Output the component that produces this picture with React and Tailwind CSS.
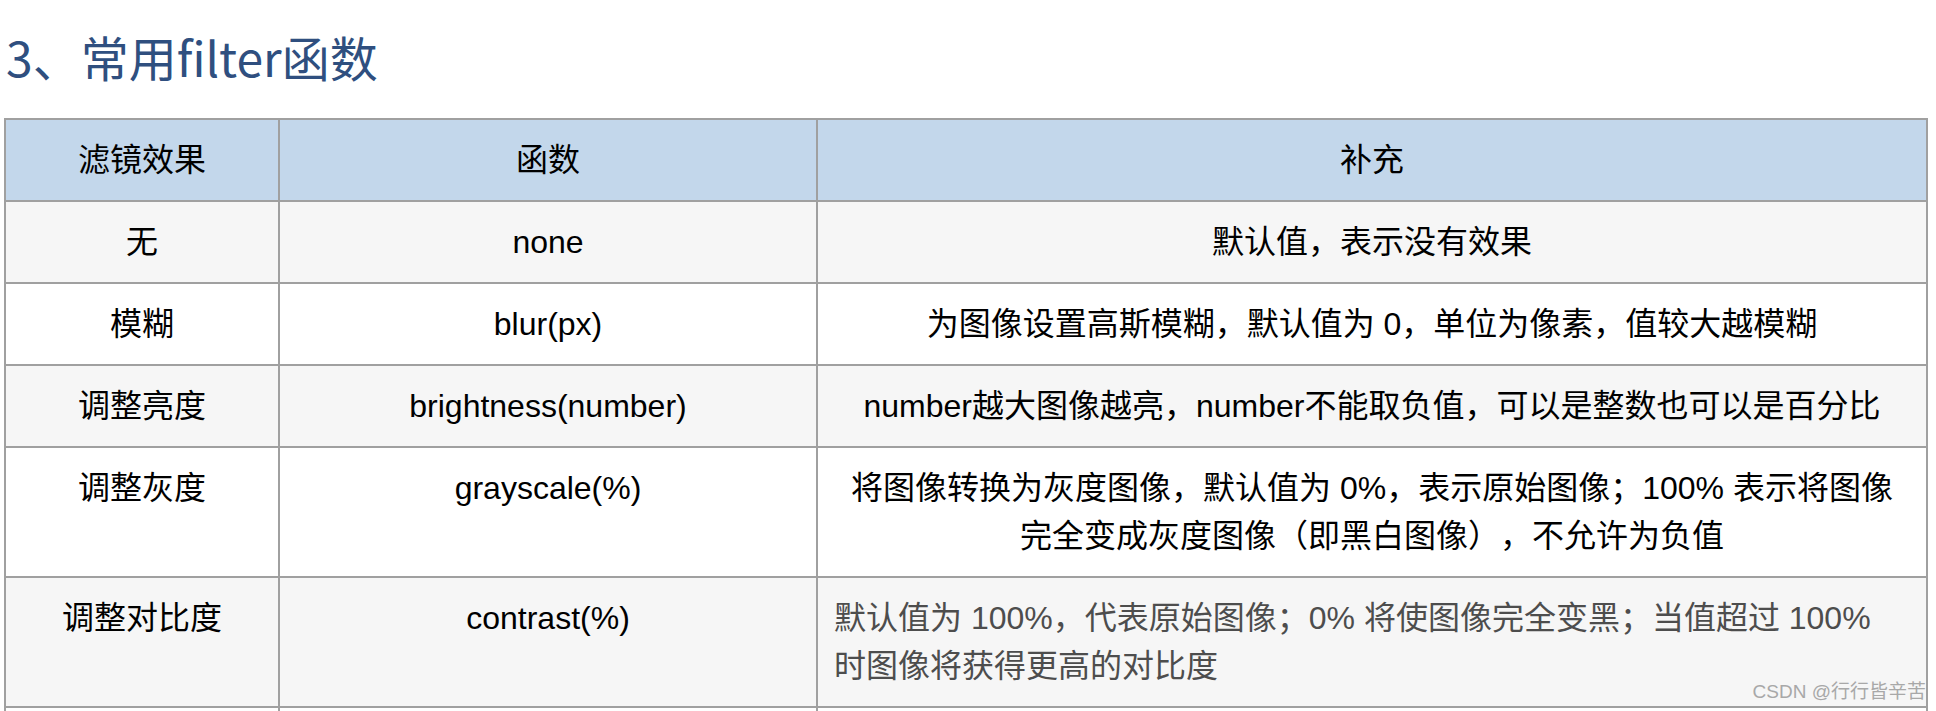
import React from 'react';

const rows = [
  { effect: '无', fn: 'none', note: '默认值，表示没有效果' },
  { effect: '模糊', fn: 'blur(px)', note: '为图像设置高斯模糊，默认值为 0，单位为像素，值较大越模糊' },
  { effect: '调整亮度', fn: 'brightness(number)', note: 'number越大图像越亮，number不能取负值，可以是整数也可以是百分比' },
  {
    effect: '调整灰度',
    fn: 'grayscale(%)',
    note: (
      <>
        将图像转换为灰度图像，默认值为 0%，表示原始图像；100% 表示将图像
        <br />
        完全变成灰度图像（即黑白图像），不允许为负值
      </>
    ),
  },
  {
    effect: '调整对比度',
    fn: 'contrast(%)',
    muted: true,
    note: (
      <>
        默认值为 100%，代表原始图像；0% 将使图像完全变黑；当值超过 100%
        <br />
        时图像将获得更高的对比度
      </>
    ),
  },
];

const cell = 'border-r-2 border-b-2 border-[#a0a0a0] px-4 py-4 leading-[48px]';

export default function App() {
  return (
    <div className="relative h-[711px] overflow-hidden bg-white font-['Liberation_Sans','Noto_Sans_CJK_SC',sans-serif] text-[32px] text-black [text-spacing-trim:space-all]">
      <h3 className="pl-[6px] pt-[24px] pb-[30px] text-[48px] leading-[64px] font-normal text-[#2f4f7f] font-['Noto_Sans_CJK_SC',sans-serif]">
        3、常用filter函数
      </h3>

      <div className="ml-[4px] grid w-[1924px] grid-cols-[274px_538px_1110px] border-l-2 border-t-2 border-[#a0a0a0]">
        <div className={`${cell} bg-[#c3d7eb] text-center`}>滤镜效果</div>
        <div className={`${cell} bg-[#c3d7eb] text-center`}>函数</div>
        <div className={`${cell} bg-[#c3d7eb] text-center`}>补充</div>

        {rows.map((r, i) => {
          const bg = i % 2 === 0 ? 'bg-[#f6f6f6]' : 'bg-white';
          return (
            <React.Fragment key={i}>
              <div className={`${cell} ${bg} text-center`}>{r.effect}</div>
              <div className={`${cell} ${bg} text-center`}>{r.fn}</div>
              <div className={`${cell} ${bg} ${r.muted ? 'text-left text-[#4d4d4d]' : 'text-center'}`}>{r.note}</div>
            </React.Fragment>
          );
        })}

        <div className={`${cell} h-20 bg-white`}></div>
        <div className={`${cell} h-20 bg-white`}></div>
        <div className={`${cell} h-20 bg-white`}></div>
      </div>

      <div className="absolute right-[10px] top-[680px] text-[19px] leading-6 text-[#a8a8a8]">
        CSDN @行行皆辛苦
      </div>
    </div>
  );
}
